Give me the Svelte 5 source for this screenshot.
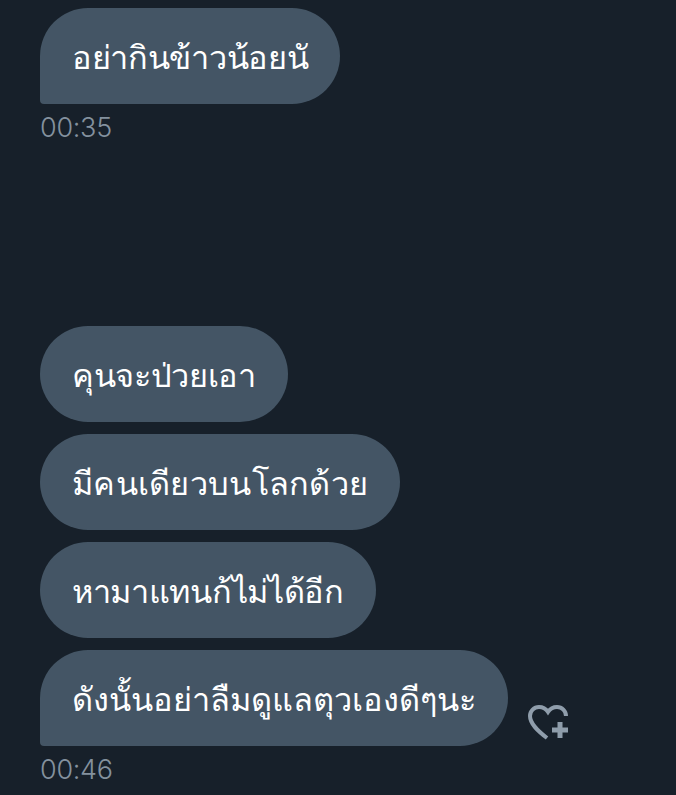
<script>
	const first = [{ text: 'อย่ากินข้าวน้อยนั', track: -0.31 }];
	const second = [
		{ text: 'คุนจะป่วยเอา', track: -0.33 },
		{ text: 'มีคนเดียวบนโลกด้วย', track: 0.28 },
		{ text: 'หามาแทนก้ไม่ได้อีก', track: -0.31 },
		{ text: 'ดังนั้นอย่าลืมดูแลตุวเองดีๆนะ', track: 0 }
	];
</script>

<main class="chat">
	<section class="group first">
		{#each first as msg}
			<div class="row"><div class="bubble last" style="letter-spacing: {msg.track}px">{msg.text}</div></div>
		{/each}
		<time>00:35</time>
	</section>

	<section class="group second">
		{#each second as msg, i}
			<div class="row">
				<div class="bubble" class:last={i === second.length - 1} style="letter-spacing: {msg.track}px">{msg.text}</div>
				{#if i === second.length - 1}
					<svg class="react" viewBox="0 0 40 35" width="40" height="35" fill="none" stroke="#8f9dab">
						<path stroke-width="4" d="M19 33 C 10 26 2 19 2 11 C 2 6 6 2 11 2 C 15 2 18 4 20 7 C 22 4 25 2 29 2 C 34 2 38 6 38 11" />
						<path stroke-width="5" d="M32 17 V 33 M24 25 H 40" />
					</svg>
				{/if}
			</div>
		{/each}
		<time>00:46</time>
	</section>
</main>

<style>
	:global(body) {
		margin: 0;
		background: #17202a;
	}
	.chat {
		height: 795px;
		overflow: hidden;
		padding: 8px 0 0 40px;
		box-sizing: border-box;
		font-family: "Noto Sans", "Liberation Sans", sans-serif;
		background: #17202a;
	}
	.group {
		display: flex;
		flex-direction: column;
		gap: 12px;
	}
	.second {
		margin-top: 180px;
	}
	.row {
		display: flex;
		align-items: flex-end;
	}
	.bubble {
		height: 96px;
		box-sizing: border-box;
		padding: 2px 32px 0;
		display: flex;
		align-items: center;
		border-radius: 48px;
		background: #445565;
		color: #fff;
		font-size: 32.5px;
		white-space: nowrap;
	}
	.last {
		border-bottom-left-radius: 4px;
	}
	.react {
		margin: 0 0 6px 20px;
	}
	time {
		display: block;
		margin-top: -6px;
		color: #84919e;
		font-family: Inter, "Liberation Sans", sans-serif;
		font-weight: 300;
		font-size: 27px;
		letter-spacing: -0.3px;
		line-height: 36px;
	}
</style>
